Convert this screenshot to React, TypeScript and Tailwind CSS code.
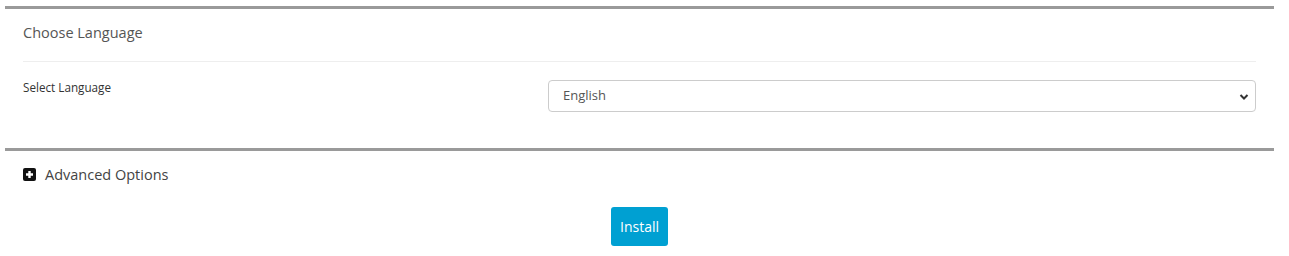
import React from "react";

export default function App() {
  return (
    <div className="w-[1289px] h-[256px] bg-white px-[5px] pt-[6px] text-[#333]" style={{ fontFamily: '"Open Sans", sans-serif' }}>
      <div className="w-[1269px] border-t-[3px] border-[#9a9a9a]">
        <div className="px-[18px]">
          <div className="h-[53px] pb-[4px] flex items-center border-b border-[#eeeeee] w-[1233px]">
            <span className="text-[14.5px] text-[#555]">Choose Language</span>
          </div>
          <div className="flex pt-[18px] pb-[36px]">
            <div className="w-[525px] text-[11.7px] leading-[14px] text-[#333]">Select Language</div>
            <div className="relative w-[708px] h-[32px] border border-[#cccccc] rounded-[4px] flex items-center pl-[14px]">
              <span className="text-[13px] text-[#555]">English</span>
              <svg className="absolute right-[6px] top-[12px]" width="10" height="8" viewBox="0 0 10 8">
                <path d="M1.5 2 L5 5.5 L8.5 2" fill="none" stroke="#333" strokeWidth="2" />
              </svg>
            </div>
          </div>
        </div>
      </div>
      <div className="w-[1269px] border-t-[3px] border-[#9a9a9a]">
        <div className="px-[18px] pt-[13px] flex items-center gap-[9px]">
          <svg width="13" height="13" viewBox="0 0 13 13">
            <rect x="0" y="0" width="13" height="13" rx="2" fill="#111" />
            <path d="M6.5 3 V10 M3 6.5 H10" stroke="#fff" strokeWidth="2.4" />
          </svg>
          <span className="text-[14.5px] text-[#444]">Advanced Options</span>
        </div>
        <div className="flex justify-center pt-[21px]">
          <button className="w-[57px] h-[39px] bg-[#00a0d2] rounded-[3px] text-white text-[14px]">Install</button>
        </div>
      </div>
    </div>
  );
}
